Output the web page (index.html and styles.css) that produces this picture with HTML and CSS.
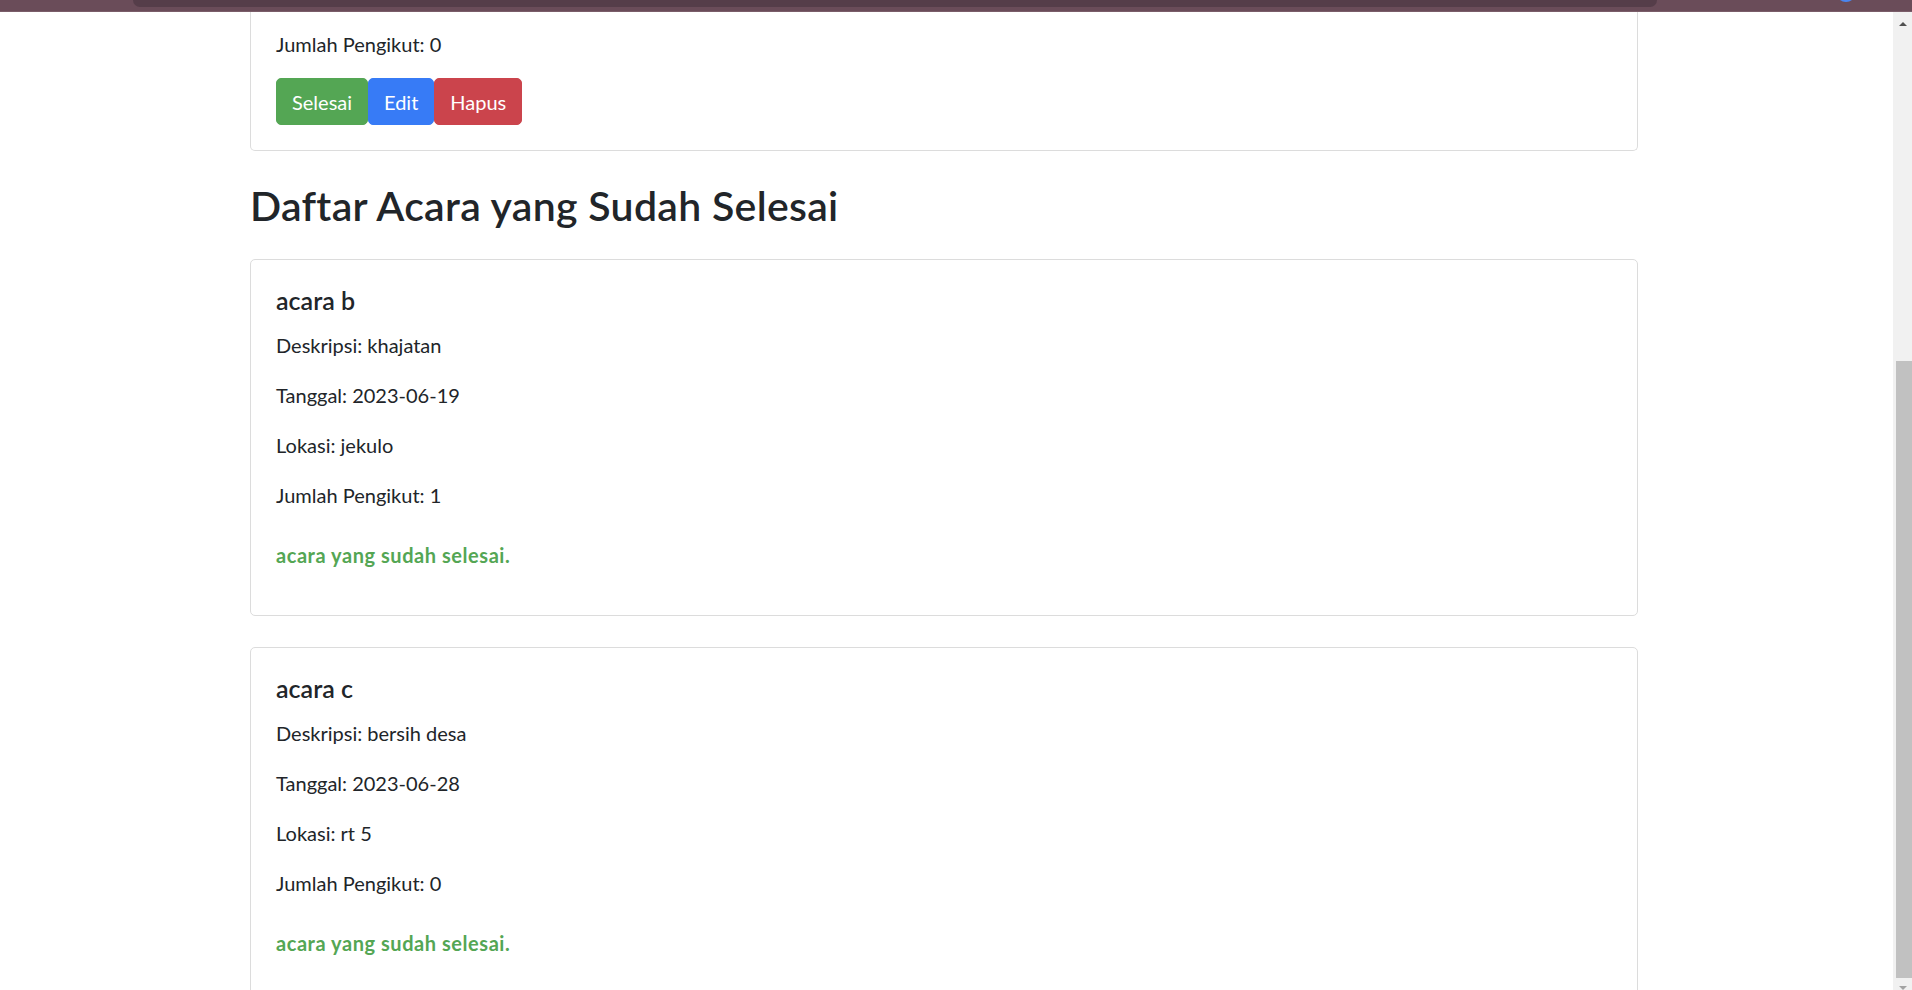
FILE: index.html
```html
<!DOCTYPE html>
<html lang="id">
<head>
<meta charset="utf-8">
<title>Daftar Acara</title>
<link rel="stylesheet" href="styles.css">
</head>
<body>
<div class="chrome">
  <div class="chrome-tab"></div>
  <div class="chrome-avatar"></div>
</div>
<div class="frame">
  <main class="viewport">
    <div class="container">
      <div class="card card-cut">
        <div class="card-body">
          <p>Jumlah Pengikut: 0</p>
          <div class="btn-row">
            <button class="btn btn-success">Selesai</button><button class="btn btn-primary">Edit</button><button class="btn btn-danger">Hapus</button>
          </div>
        </div>
      </div>

      <h2 class="section-title">Daftar Acara yang Sudah Selesai</h2>

      <div class="card">
        <div class="card-body">
          <h5 class="card-title">acara b</h5>
          <p>Deskripsi: khajatan</p>
          <p>Tanggal: 2023-06-19</p>
          <p>Lokasi: jekulo</p>
          <p>Jumlah Pengikut: 1</p>
          <p class="done"><strong>acara yang sudah selesai.</strong></p>
        </div>
      </div>

      <div class="card">
        <div class="card-body">
          <h5 class="card-title">acara c</h5>
          <p>Deskripsi: bersih desa</p>
          <p>Tanggal: 2023-06-28</p>
          <p>Lokasi: rt 5</p>
          <p>Jumlah Pengikut: 0</p>
          <p class="done"><strong>acara yang sudah selesai.</strong></p>
        </div>
      </div>
    </div>
  </main>
  <div class="scrollbar">
    <div class="arrow-up"></div>
    <div class="thumb"></div>
    <div class="arrow-down"></div>
  </div>
</div>
</body>
</html>
```

FILE: styles.css
```css
* { box-sizing: border-box; }

html, body {
  margin: 0;
  height: 990px;
  overflow: hidden;
}

body {
  font-family: Lato, "Open Sans", sans-serif;
  font-size: 20px;
  line-height: 30px;
  color: #212529;
  background: #ffffff;
  display: flex;
  flex-direction: column;
}

/* browser chrome remnant */
.chrome {
  height: 12px;
  flex: 0 0 12px;
  background: #6a4c59;
  display: flex;
  align-items: flex-start;
  overflow: hidden;
  border-bottom: 1px solid #7a5d69;
}
.chrome-tab {
  margin-left: 133px;
  width: 1524px;
  height: 7px;
  background: #553d49;
  border-radius: 0 0 9px 9px;
}
.chrome-avatar {
  margin-left: 179px;
  margin-top: -18px;
  width: 20px;
  height: 20px;
  border-radius: 50%;
  background: #4a86f0;
}

.frame {
  flex: 1;
  display: flex;
  min-height: 0;
}

.viewport {
  flex: 1;
  overflow: hidden;
}

.container {
  margin-left: 250px;
  width: 1388px;
}

.card {
  border: 1px solid #dcdcdc;
  border-radius: 5px;
  margin-bottom: 31px;
}
.card-cut {
  border-top: none;
  border-radius: 0 0 5px 5px;
}
.card-body {
  padding: 25px;
}
.card-cut .card-body {
  padding-top: 17px;
}

p {
  margin: 0 0 20px;
}
.card-cut p {
  margin-bottom: 19px;
}

.btn-row {
  display: flex;
}
.btn {
  font-family: inherit;
  font-size: 20px;
  line-height: 30px;
  height: 47px;
  padding: 7px 15px;
  border: 1px solid transparent;
  border-radius: 5px;
  color: #ffffff;
  cursor: pointer;
}
.btn-success { background: #54a654; border-color: #54a654; }
.btn-primary { background: #377bf6; border-color: #377bf6; }
.btn-danger  { background: #cb444c; border-color: #cb444c; }

.section-title {
  font-size: 41px;
  line-height: 48px;
  font-weight: 600;
  letter-spacing: 0.3px;
  margin: 0 0 29px;
}

.card-title {
  font-size: 25px;
  line-height: 30px;
  font-weight: 600;
  margin: 0 0 15px;
}

.done {
  margin-top: 30px;
  color: #54a654;
}
.done strong {
  font-weight: 700;
  letter-spacing: 0.55px;
}

/* fake scrollbar */
.scrollbar {
  width: 19px;
  flex: 0 0 19px;
  background: #f1f1f1;
  display: flex;
  flex-direction: column;
  align-items: center;
}
.arrow-up {
  margin-top: 10px;
  width: 0;
  height: 0;
  border-left: 4px solid transparent;
  border-right: 4px solid transparent;
  border-bottom: 4px solid #505050;
}
.thumb {
  margin-top: 335px;
  width: 16px;
  height: 620px;
  background: #c1c1c1;
  margin-left: 2px;
}
.arrow-down {
  margin-top: 8px;
  width: 0;
  height: 0;
  border-left: 4px solid transparent;
  border-right: 4px solid transparent;
  border-top: 4px solid #a3a3a3;
}
```
